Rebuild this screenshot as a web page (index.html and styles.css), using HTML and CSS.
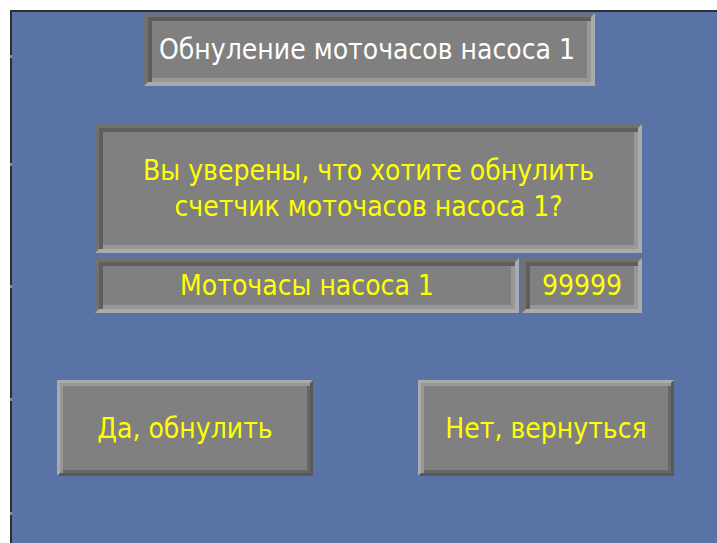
FILE: index.html
```html
<!DOCTYPE html>
<html lang="ru">
<head>
<meta charset="utf-8">
<title>Обнуление моточасов насоса 1</title>
<link rel="stylesheet" href="styles.css">
</head>
<body>
<div class="screen">
  <span class="tick" style="top: 43px"></span>
  <span class="tick" style="top: 151px"></span>
  <span class="tick" style="top: 273px"></span>
  <span class="tick" style="top: 386px"></span>
  <span class="tick" style="top: 500px"></span>

  <div class="title panel-sunken">Обнуление моточасов насоса 1</div>

  <div class="confirm">
    <div class="message panel-sunken">
      <p>Вы уверены, что хотите обнулить</p>
      <p>счетчик моточасов насоса 1?</p>
    </div>
    <div class="counter">
      <div class="counter-label panel-sunken">Моточасы насоса 1</div>
      <div class="counter-value panel-sunken">99999</div>
    </div>
  </div>

  <div class="actions">
    <button class="btn-raised" type="button">Да, обнулить</button>
    <button class="btn-raised" type="button">Нет, вернуться</button>
  </div>
</div>
</body>
</html>
```

FILE: styles.css
```css
html, body {
  margin: 0;
  padding: 0;
  background: #ffffff;
  width: 717px;
  height: 543px;
  overflow: hidden;
}

body {
  font-family: "DejaVu Sans Condensed", "DejaVu Sans", "Liberation Sans", sans-serif;
  font-stretch: condensed;
}

/* operator panel canvas */
.screen {
  position: relative;
  margin: 10px 0 0 10px;
  height: 531px;
  border-left: 2px solid #2e2e2e;
  border-top: 2px solid #2e2e2e;
  background: #5a73a6;
  display: flex;
  flex-direction: column;
  align-items: flex-start;
}

.tick {
  position: absolute;
  left: -2px;
  width: 2px;
  height: 3px;
  background: #8a8a8a;
}

/* sunken grey field: dark top/left, light bottom/right */
.panel-sunken {
  box-sizing: border-box;
  background: #808080;
  border: 4px solid;
  border-color: #717171 #ababab #ababab #717171;
  box-shadow: inset 4px 4px 0 #5e5e5e, inset -4px -4px 0 #989898;
  display: flex;
  align-items: center;
  justify-content: center;
  font-size: 28px;
  color: #ffff00;
  white-space: nowrap;
}

.title {
  margin: 1px 0 0 132px;
  width: 451px;
  height: 73px;
  justify-content: flex-start;
  padding-left: 11px;
  color: #ffffff;
}

.confirm {
  margin: 38px 0 0 83px;
  width: 547px;
  display: flex;
  flex-direction: column;
  gap: 5px;
}

.message {
  height: 129px;
  flex-direction: column;
}

.message p {
  margin: 0;
  line-height: 36px;
}

.counter {
  display: flex;
  gap: 3px;
}

.counter-label {
  width: 424px;
  height: 55px;
}

.counter-value {
  width: 120px;
  height: 55px;
}

.actions {
  margin: 67px 0 0 45px;
  display: flex;
  gap: 105px;
}

/* raised push button: light top/left, dark bottom/right */
.btn-raised {
  box-sizing: border-box;
  width: 256px;
  height: 96px;
  padding: 0;
  background: #808080;
  border: 3px solid;
  border-color: #ababab #595959 #595959 #ababab;
  box-shadow: inset 3px 3px 0 #979797, inset -3px -3px 0 #676767;
  font-family: inherit;
  font-stretch: condensed;
  font-size: 28px;
  color: #ffff00;
  white-space: nowrap;
}
```
